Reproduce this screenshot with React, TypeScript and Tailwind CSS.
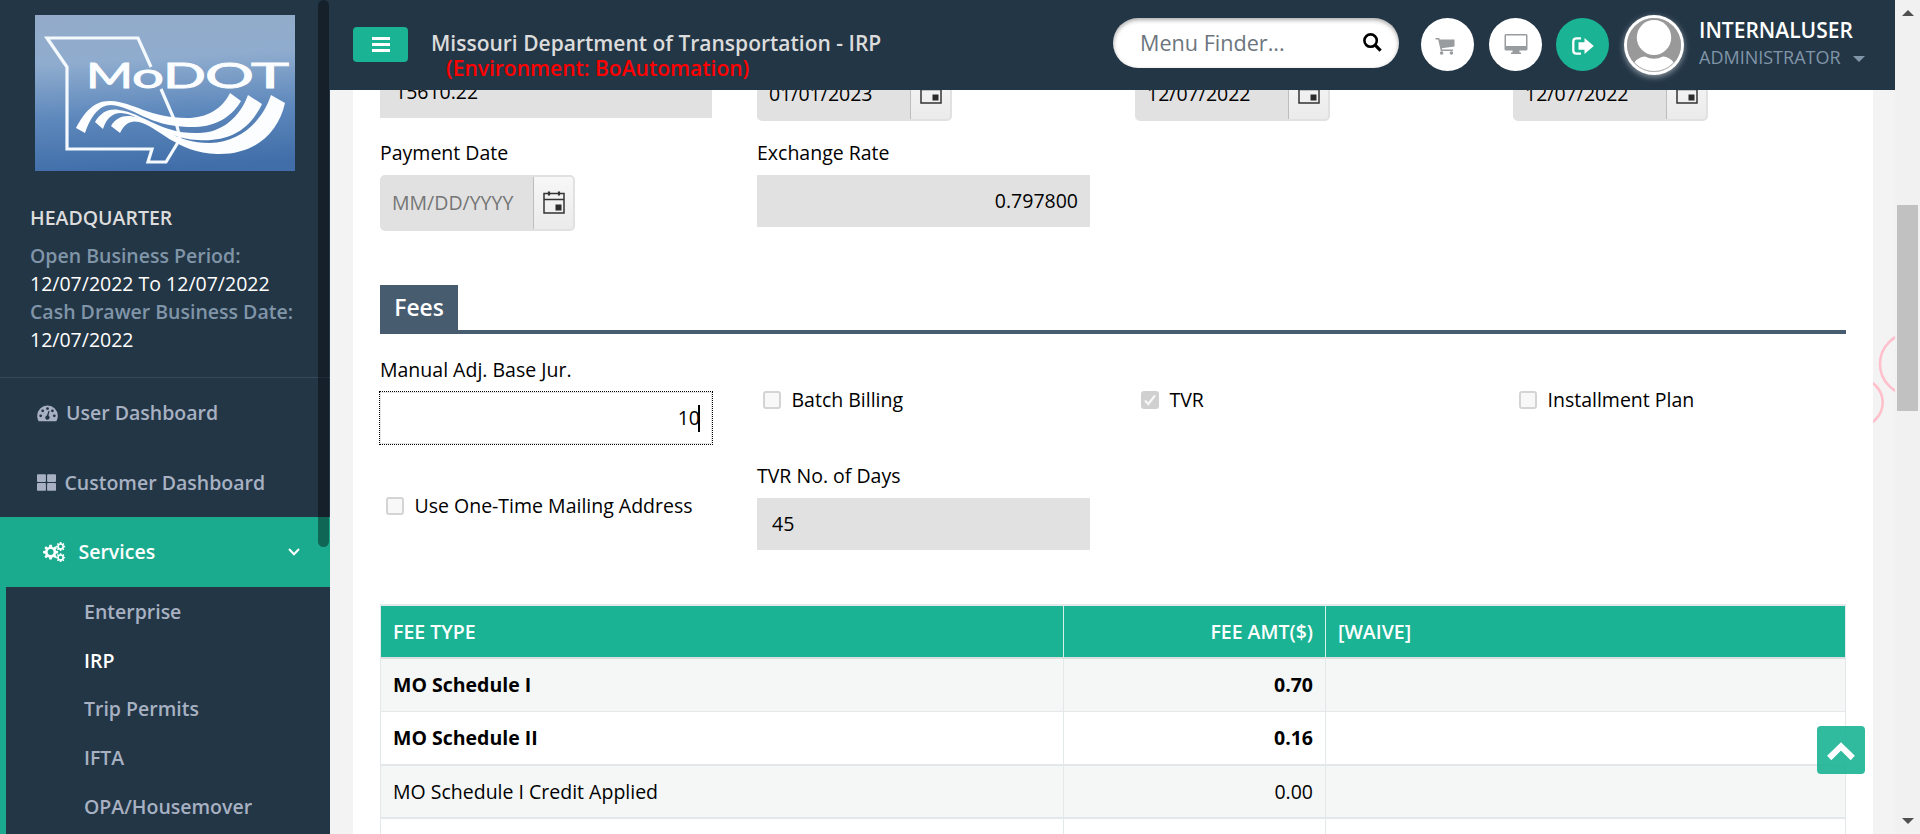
import React from "react";
import { FaThLarge } from "react-icons/fa";

type Row = { type: string; amt: string; bold: boolean };

const rows: Row[] = [
  { type: "MO Schedule I", amt: "0.70", bold: true },
  { type: "MO Schedule II", amt: "0.16", bold: true },
  { type: "MO Schedule I Credit Applied", amt: "0.00", bold: false },
];

const rowStyles = [
  "h-[53px] bg-[#f4f7f6] border-b border-[#e3e8eb]",
  "h-[54px] bg-white border-b-2 border-[#e3e8eb]",
  "h-[53px] bg-[#f4f7f6] border-b-2 border-[#e3e8eb]",
];

function Logo() {
  return (
    <svg width="260" height="156" viewBox="0 0 260 156" className="block">
      <defs>
        <linearGradient id="sky" x1="0.2" y1="0" x2="0.3" y2="1">
          <stop offset="0" stopColor="#93abc9" />
          <stop offset="0.3" stopColor="#8facce" />
          <stop offset="0.65" stopColor="#5d88bc" />
          <stop offset="1" stopColor="#416ea9" />
        </linearGradient>
      </defs>
      <rect width="260" height="156" fill="url(#sky)" />
      <path
        d="M116 52 L103 23 H12 L32 52 V134 H117 L113 147 H131 L145 124 L142 111 L126 74"
        fill="none"
        stroke="#f4f9fd"
        strokeWidth="3.2"
      />
      <g fill="#fbfdff">
        <path d="M41 113 C50 96 60 85 76 86 C98 87 115 103 152 103 C172 103 187 94 195 78 L206 86 C194 106 175 113 153 112 C113 111 100 92 76 90 C64 90 56 101 50 118 Z" />
        <path d="M60 107 C66 97 74 93 84 95 C108 98 125 119 163 118 C187 118 205 102 213 80 L227 89 C214 116 193 127 163 125 C124 123 106 99 86 98 C77 98 71 104 68 114 Z" />
        <path d="M76 111 C82 101 92 99 103 103 C124 109 140 128 175 128 C205 127 227 107 236 80 L250 88 C243 119 219 140 182 139 C142 138 122 111 104 107 C96 105 90 108 85 118 Z" />
      </g>
      <g
        fill="#fbfdff"
        fontFamily="Lato, sans-serif"
        fontWeight="400"
        stroke="#fbfdff"
        strokeWidth="0.9"
      >
        <text x="51" y="73" fontSize="35" textLength="47" lengthAdjust="spacingAndGlyphs">M</text>
        <text x="97" y="73" fontSize="35" textLength="32" lengthAdjust="spacingAndGlyphs">o</text>
        <text x="128" y="73" fontSize="35" textLength="43" lengthAdjust="spacingAndGlyphs">D</text>
        <text x="170" y="73" fontSize="35" textLength="49" lengthAdjust="spacingAndGlyphs">O</text>
        <text x="216" y="73" fontSize="35" textLength="38" lengthAdjust="spacingAndGlyphs">T</text>
      </g>
    </svg>
  );
}

function Gauge() {
  return (
    <svg width="21" height="17" viewBox="0 0 21 17">
      <path d="M10.5 0.5 A10.2 10.2 0 0 0 0.2 10.7 C0.2 12.8 0.8 14.6 1.7 16.2 H19.3 C20.2 14.6 20.8 12.8 20.8 10.7 A10.2 10.2 0 0 0 10.5 0.5Z" fill="#a7b1c2" />
      <g fill="#233646">
        <circle cx="3.7" cy="10.8" r="1.4" />
        <circle cx="5.7" cy="5.8" r="1.4" />
        <circle cx="10.5" cy="3.6" r="1.4" />
        <circle cx="15.4" cy="5.8" r="1.4" />
        <circle cx="17.3" cy="10.8" r="1.4" />
        <path d="M11.6 5.8 L12.6 6.1 L11.5 10.6 A2.2 2.2 0 1 1 9.9 10.4Z" />
      </g>
    </svg>
  );
}

const cogPath =
  "M-1.1 -6.3 H1.1 L1.5 -4.4 L2.6 -3.9 L4.2 -5 L5.6 -3.5 L4.4 -1.9 L4.8 -1 L6.6 -.8 V1.2 L4.8 1.5 L4.3 2.6 L5.4 4.1 L4 5.5 L2.5 4.4 L1.4 4.8 L1.1 6.6 H-1.1 L-1.4 4.8 L-2.5 4.4 L-4 5.5 L-5.4 4.1 L-4.3 2.6 L-4.8 1.5 L-6.6 1.2 V-.8 L-4.8 -1 L-4.3 -2.1 L-5.5 -3.6 L-4 -5 L-2.5 -3.9 L-1.5 -4.4Z M0 -2.6 A2.6 2.6 0 1 0 0 2.6 A2.6 2.6 0 1 0 0 -2.6Z";

function Cogs() {
  return (
    <svg width="23" height="20" viewBox="0 0 23 20" fill="#fff" fillRule="evenodd">
      <path d={cogPath} transform="translate(7.6 10) scale(1.14)" />
      <path d={cogPath} transform="translate(17.6 4.4) scale(.68)" />
      <path d={cogPath} transform="translate(17.6 15.5) scale(.68)" />
    </svg>
  );
}

function CalendarIcon() {
  return (
    <svg width="22" height="23" viewBox="0 0 22 23" className="-mt-[2px]">
      <path d="M1 2.5 H21 V22 H1Z M1 8.5 H21" fill="none" stroke="#333" strokeWidth="1.5" />
      <path d="M6 .5 V4.5 M16 .5 V4.5" stroke="#333" strokeWidth="2.2" />
      <rect x="12.5" y="13.5" width="6" height="6" fill="#2b2b2b" />
    </svg>
  );
}

function DateField({ value, placeholder = false }: { value: string; placeholder?: boolean }) {
  return (
    <div className="flex h-[56px] w-[195px] overflow-hidden rounded-[5px] border-2 border-[#e1e1e1] bg-[#e1e1e1]">
      <div
        className={
          placeholder
            ? "flex w-[151px] items-center pl-[10px] text-[19.5px] text-[#757575]"
            : "flex w-[151px] items-center pl-[10px] pt-px text-[19.5px] text-black"
        }
      >
        {value}
      </div>
      <div className="flex flex-1 items-center justify-center border-l border-[#bdbdbd] bg-gradient-to-b from-[#f7f7f7] to-[#ebebeb]">
        <CalendarIcon />
      </div>
    </div>
  );
}

function Check({ label, checked = false }: { label: string; checked?: boolean }) {
  return (
    <div className="flex items-center pl-[6px] text-[19.5px] leading-[30px] text-black">
      <span
        className={
          checked
            ? "flex h-[18px] w-[18px] items-center justify-center rounded-[3px] bg-[#d0d0d0]"
            : "h-[18px] w-[18px] rounded-[3px] border-2 border-[#d4d4d4] bg-[#f8f8f8]"
        }
      >
        {checked && (
          <svg width="14" height="14" viewBox="0 0 14 14" fill="none" stroke="#f6f6f6" strokeWidth="2.2">
            <path d="M2 7.5 L5.3 11 L12 2.5" />
          </svg>
        )}
      </span>
      <span className="ml-[10.5px]">{label}</span>
    </div>
  );
}

function Sidebar() {
  return (
    <aside className="relative flex h-[834px] w-[330px] shrink-0 flex-col overflow-hidden bg-[#233646]">
      <div className="h-[378px] shrink-0 border-b border-[#33495c] pl-[30px] pt-[15px]">
        <div className="pl-[5px]">
          <Logo />
        </div>
        <div className="mt-[32px] text-[19.5px] font-semibold leading-[30px] text-[#dcdcdc]">HEADQUARTER</div>
        <div className="mt-[9px] whitespace-nowrap text-[19.5px] leading-[28px] text-white">
          <div className="font-semibold text-[#8095a8]">Open Business Period:</div>
          <div>12/07/2022 To 12/07/2022</div>
          <div className="font-semibold text-[#8095a8]">Cash Drawer Business Date:</div>
          <div>12/07/2022</div>
        </div>
      </div>
      <nav className="text-[19.5px] font-semibold text-[#a7b1c2]">
        <div className="flex h-[70px] items-center pl-[37px]">
          <Gauge />
          <span className="ml-[8px]">User Dashboard</span>
        </div>
        <div className="flex h-[69px] items-center pl-[37px]">
          <FaThLarge size={19} />
          <span className="ml-[8.5px]">Customer Dashboard</span>
        </div>
        <div className="flex h-[70px] items-center bg-[#1aab8e] pl-[43px] pr-[30px] text-white">
          <Cogs />
          <span className="ml-[12.5px] flex-1">Services</span>
          <svg width="12" height="8" viewBox="0 0 12 8" fill="none" stroke="#fff" strokeWidth="2">
            <path d="M1 1 L6 6.2 L11 1" />
          </svg>
        </div>
        <div className="h-[260px] border-l-[6px] border-[#1aab8e] pl-[78px] pt-px leading-[48.7px]">
          <div>Enterprise</div>
          <div className="text-white">IRP</div>
          <div>Trip Permits</div>
          <div>IFTA</div>
          <div>OPA/Housemover</div>
        </div>
      </nav>
      <div className="absolute left-[318px] top-0 h-[547px] w-[11px] rounded-[6px] bg-black/40" />
    </aside>
  );
}

function Header() {
  return (
    <header className="relative flex h-[90px] shrink-0 bg-[#233646]">
      <div className="ml-[23px] mt-[27px] flex h-[35px] w-[55px] items-center justify-center rounded-[4px] bg-[#1ab394]">
        <svg width="18" height="15" viewBox="0 0 18 15" fill="#fff">
          <path d="M0 0H18V3H0Z M0 6H18V9H0Z M0 12H18V15H0Z" />
        </svg>
      </div>
      <div className="ml-[23px] mt-[31px] w-[682px] whitespace-nowrap text-[21px] font-semibold leading-[25px]">
        <div className="text-[#dcdcdc]">Missouri Department of Transportation - IRP</div>
        <div className="pl-[15px] text-[#ff0000]">(Environment: BoAutomation)</div>
      </div>
      <div className="mt-[18px] flex h-[50px] w-[286px] items-center rounded-full bg-white pl-[27px] pr-[17px] text-[21.6px] text-[#6c757d] shadow-[inset_0_2px_4px_rgba(0,0,0,0.35)]">
        <span className="flex-1">Menu Finder...</span>
        <svg width="19" height="19" viewBox="0 0 19 19" fill="none" stroke="#000" className="-mt-[2px]">
          <circle cx="7.6" cy="7.6" r="6.2" strokeWidth="2.6" />
          <path d="M12.2 12.2 L17.6 17.6" strokeWidth="3.2" />
        </svg>
      </div>
      <div className="ml-[22px] mt-[18px] flex h-[53px] w-[53px] items-center justify-center rounded-full bg-white">
        <svg width="20" height="17" viewBox="0 0 20 17" className="-ml-[5px] mt-[3px]" fill="#999c9e">
          <path d="M.5 0H4.2L4.7 1.5H19.5V8.5L6.8 10.3L7.1 11.5H18V13H5.8L3.2 1.5H.5Z" />
          <circle cx="6.6" cy="15" r="1.8" />
          <circle cx="16.4" cy="15" r="1.8" />
        </svg>
      </div>
      <div className="ml-[15px] mt-[18px] flex h-[53px] w-[53px] items-center justify-center rounded-full bg-white">
        <svg width="24" height="20" viewBox="0 0 24 20" fill="#999c9e" fillRule="evenodd" className="-mt-px">
          <path d="M2 0H22Q23.5 0 23.5 1.5V15Q23.5 16.5 22 16.5H15.5V18.5H17V20H7V18.5H8.5V16.5H2Q.5 16.5 .5 15V1.5Q.5 0 2 0Z M2 1.5V12H22V1.5Z" />
        </svg>
      </div>
      <div className="ml-[14px] mt-[18px] flex h-[53px] w-[53px] items-center justify-center rounded-full bg-[#1ab394]">
        <svg width="22" height="18" viewBox="0 0 22 18" className="mt-[3px]">
          <path d="M9 1.3H4.5Q1.3 1.3 1.3 4.5V13.5Q1.3 16.7 4.5 16.7H9" fill="none" stroke="#fff" strokeWidth="2.3" />
          <path d="M6.5 5.3H12.5V1L21.8 9L12.5 17V12.7H6.5Z" fill="#fff" />
        </svg>
      </div>
      <svg width="80" height="80" viewBox="0 0 80 80" className="ml-[5px] mt-[5px] shrink-0">
        <defs>
          <clipPath id="face"><circle cx="40" cy="40" r="27" /></clipPath>
          <filter id="glow" x="-30%" y="-30%" width="160%" height="160%"><feGaussianBlur stdDeviation="3" /></filter>
        </defs>
        <circle cx="40" cy="42" r="30" fill="#fff" opacity=".5" filter="url(#glow)" />
        <circle cx="40" cy="40" r="30" fill="#fff" />
        <g clipPath="url(#face)">
          <rect width="80" height="80" fill="#999" />
          <ellipse cx="40" cy="32.5" rx="17.2" ry="17.5" fill="#fff" />
          <path d="M20 70 V58 Q24 52 31 51.5 Q40 56 49 51.5 Q56 52 60 58 V70Z" fill="#fff" />
        </g>
        <circle cx="40" cy="40" r="26.5" fill="none" stroke="#999" strokeWidth=".8" />
      </svg>
      <div className="ml-[5px] mt-[16px] whitespace-nowrap">
        <div className="text-[21px] font-semibold leading-[28px] text-white">INTERNALUSER</div>
        <div className="flex items-center text-[18px] leading-[26px] text-[#8095a8]">
          ADMINISTRATOR
          <svg width="12" height="6" viewBox="0 0 12 6" className="ml-[12px] mt-[4px]"><path d="M0 0H12L6 6Z" fill="#8095a8" /></svg>
        </div>
      </div>
    </header>
  );
}

function Content() {
  return (
    <main className="relative flex h-[744px] overflow-hidden bg-[#f3f3f4] pl-[23px]">
      <div className="h-[744px] w-[1520px] bg-white px-[27px]">
        <div className="flex h-[31px] items-end">
          <div className="mb-[3px] flex h-[52px] w-[332px] items-center bg-[#e1e1e1] pl-[15px] text-[19.5px] text-black">15610.22</div>
          <div className="ml-[45px]"><DateField value="01/01/2023" /></div>
          <div className="ml-[183px]"><DateField value="12/07/2022" /></div>
          <div className="ml-[183px]"><DateField value="12/07/2022" /></div>
        </div>
        <div className="mt-[17px] grid grid-cols-[377px_378px_378px_333px] text-[19.5px] leading-[30px] text-black">
          <div>
            <div>Payment Date</div>
            <div className="mt-[7px]"><DateField value="MM/DD/YYYY" placeholder /></div>
          </div>
          <div>
            <div>Exchange Rate</div>
            <div className="mt-[7px] flex h-[52px] w-[333px] items-center justify-end bg-[#e1e1e1] pr-[12px]">0.797800</div>
          </div>
        </div>
        <div className="mt-[54px] flex h-[49px] border-b-4 border-[#485c70]">
          <div className="flex h-[49px] w-[78px] items-center justify-center bg-[#485c70] pb-[3px] text-[22.8px] font-semibold text-white">
            Fees
          </div>
        </div>
        <div className="mt-[21px] grid grid-cols-[377px_378px_378px_333px] text-[19.5px] leading-[30px] text-black">
          <div>
            <div>Manual Adj. Base Jur.</div>
            <div className="-ml-px mt-[6px] h-[54px] w-[334px] border border-dotted border-black bg-white">
              <div className="flex h-[52px] items-center justify-end border border-[#e5e6e7] pr-[11px]">
                10
                <span className="-ml-[2px] h-[27px] w-[2px] bg-black" />
              </div>
            </div>
          </div>
          <div className="pt-[30px]"><Check label="Batch Billing" /></div>
          <div className="pt-[30px]"><Check label="TVR" checked /></div>
          <div className="pt-[30px]"><Check label="Installment Plan" /></div>
        </div>
        <div className="mt-[16px] flex h-[89px] text-[19.5px] leading-[30px] text-black">
          <div className="w-[377px] pt-[30px]"><Check label="Use One-Time Mailing Address" /></div>
          <div>
            <div>TVR No. of Days</div>
            <div className="mt-[7px] flex h-[52px] w-[333px] items-center bg-[#e1e1e1] pl-[15px]">45</div>
          </div>
        </div>
        <div className="mt-[54px] w-[1466px] border-x border-t-2 border-[#e3e8eb] text-[19.5px]">
          <div className="grid h-[53px] grid-cols-[683px_262px_1fr] border-b-2 border-[#dbdfe0] bg-[#1ab394] font-semibold text-white">
            <div className="flex items-center border-r border-[#d5eee8] pl-[12px]">FEE TYPE</div>
            <div className="flex items-center justify-end border-r border-[#d5eee8] pr-[12px]">FEE AMT($)</div>
            <div className="flex items-center pl-[12px]">[WAIVE]</div>
          </div>
          {rows.map((r, i) => (
            <div key={r.type} className={rowStyles[i]}>
              <div className={r.bold ? "grid h-full grid-cols-[683px_262px_1fr] font-bold text-black" : "grid h-full grid-cols-[683px_262px_1fr] text-black"}>
                <div className="flex items-center border-r border-[#e3e8eb] pl-[12px]">{r.type}</div>
                <div className="flex items-center justify-end border-r border-[#e3e8eb] pr-[12px]">{r.amt}</div>
                <div />
              </div>
            </div>
          ))}
          <div className="grid h-[54px] grid-cols-[683px_262px_1fr] bg-white">
            <div className="border-r border-[#e3e8eb]" />
            <div className="border-r border-[#e3e8eb]" />
            <div />
          </div>
        </div>
      </div>
      <svg width="22" height="110" viewBox="0 0 22 110" className="mt-[240px] shrink-0" fill="none" stroke="#ffc0cb" strokeWidth="2.6">
        <circle cx="38" cy="34" r="31" />
        <circle cx="-14" cy="72.5" r="23.7" />
      </svg>
      <div className="absolute left-[1487px] top-[636px] flex h-[48px] w-[48px] items-center justify-center rounded-[4px] bg-[#1ab394]/90">
        <svg width="28" height="19" viewBox="0 0 28 19" fill="none" stroke="#fff" strokeWidth="6" className="mt-[3px]">
          <path d="M2.2 16 L14 4.4 L25.8 16" />
        </svg>
      </div>
    </main>
  );
}

export default function App() {
  return (
    <div className="flex h-[834px] w-[1920px] overflow-hidden bg-[#f3f3f4] font-['Open_Sans',sans-serif]">
      <Sidebar />
      <div className="flex w-[1565px] shrink-0 flex-col">
        <Header />
        <Content />
      </div>
      <div className="flex w-[25px] shrink-0 flex-col items-center bg-[#f1f1f1]">
        <svg width="12" height="6" viewBox="0 0 12 6" className="mt-[10px]"><path d="M0 6 L6 0 L12 6Z" fill="#505050" /></svg>
        <div className="mt-[189px] h-[206px] w-[21px] bg-[#c1c1c1]" />
        <svg width="12" height="6" viewBox="0 0 12 6" className="mb-[10px] mt-auto"><path d="M0 0 L6 6 L12 0Z" fill="#505050" /></svg>
      </div>
    </div>
  );
}
